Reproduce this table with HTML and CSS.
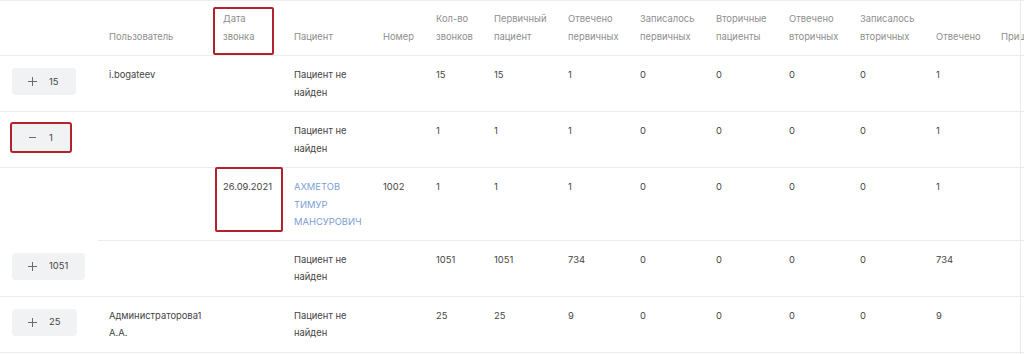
FILE: index.html
```html
<!DOCTYPE html>
<html lang="ru">
<head>
<meta charset="utf-8">
<title>Отчёт по звонкам</title>
<link rel="stylesheet" href="styles.css">
</head>
<body>
<div class="wrap">
<table class="report">
<colgroup>
<col class="w0"><col class="w1"><col class="w2"><col class="w3"><col class="w4"><col class="w5"><col class="w6"><col class="w7"><col class="w8"><col class="w9"><col class="w10"><col class="w11"><col class="w12"><col class="w13">
</colgroup>
<thead>
<tr>
<th></th>
<th>Пользователь</th>
<th class="marked"><span class="mark mark-head"></span>Дата<br>звонка</th>
<th>Пациент</th>
<th>Номер</th>
<th>Кол-во<br>звонков</th>
<th>Первичный<br>пациент</th>
<th>Отвечено<br>первичных</th>
<th>Записалось<br>первичных</th>
<th>Вторичные<br>пациенты</th>
<th>Отвечено<br>вторичных</th>
<th>Записалось<br>вторичных</th>
<th>Отвечено</th>
<th>Пришло</th>
</tr>
</thead>
<tbody>
<tr>
<td class="btn-cell"><button class="toggle"><svg class="ico" viewBox="0 0 9 9"><path d="M0 4.5H9M4.5 0V9"/></svg><span>15</span></button></td>
<td>i.bogateev</td>
<td></td>
<td>Пациент не<br>найден</td>
<td></td>
<td>15</td><td>15</td><td>1</td><td>0</td><td>0</td><td>0</td><td>0</td><td>1</td><td></td>
</tr>
<tr>
<td class="btn-cell"><button class="toggle open"><svg class="ico" viewBox="0 0 9 9"><path d="M1 4.5H8"/></svg><span>1</span></button></td>
<td></td>
<td></td>
<td>Пациент не<br>найден</td>
<td></td>
<td>1</td><td>1</td><td>1</td><td>0</td><td>0</td><td>0</td><td>0</td><td>1</td><td></td>
</tr>
<tr class="child">
<td class="blank"></td>
<td></td>
<td class="marked"><span class="mark mark-cell"></span>26.09.2021</td>
<td><a class="patient" href="#">Ахметов<br>Тимур<br>Мансурович</a></td>
<td>1002</td>
<td>1</td><td>1</td><td>1</td><td>0</td><td>0</td><td>0</td><td>0</td><td>1</td><td></td>
</tr>
<tr>
<td class="btn-cell"><button class="toggle"><svg class="ico" viewBox="0 0 9 9"><path d="M0 4.5H9M4.5 0V9"/></svg><span>1051</span></button></td>
<td></td>
<td></td>
<td>Пациент не<br>найден</td>
<td></td>
<td>1051</td><td>1051</td><td>734</td><td>0</td><td>0</td><td>0</td><td>0</td><td>734</td><td></td>
</tr>
<tr>
<td class="btn-cell"><button class="toggle"><svg class="ico" viewBox="0 0 9 9"><path d="M0 4.5H9M4.5 0V9"/></svg><span>25</span></button></td>
<td>Администраторова1<br>А.А.</td>
<td></td>
<td>Пациент не<br>найден</td>
<td></td>
<td>25</td><td>25</td><td>9</td><td>0</td><td>0</td><td>0</td><td>0</td><td>9</td><td></td>
</tr>
</tbody>
</table>
</div>
</body>
</html>
```
FILE: styles.css
```css
html, body {
  margin: 0;
  padding: 0;
  background: #fff;
}
body {
  font-family: Inter, "Noto Sans", sans-serif;
  font-size: 9.4px;
  color: #454545;
}
.wrap {
  position: relative;
  width: 1024px;
  height: 354px;
  overflow: hidden;
}
.wrap::after {
  content: "";
  position: absolute;
  top: 0;
  bottom: 0;
  left: 1020px;
  width: 1px;
  background: #e9e9e9;
}
.report {
  table-layout: fixed;
  width: 1090px;
  border-collapse: collapse;
  border-top: 1px solid #eeeeee;
}
.w0 { width: 98px; }
.w1 { width: 114px; }
.w2 { width: 71px; }
.w3 { width: 89px; }
.w4 { width: 53px; }
.w5 { width: 58px; }
.w6 { width: 74px; }
.w7 { width: 72px; }
.w8 { width: 76px; }
.w9 { width: 73px; }
.w10 { width: 71px; }
.w11 { width: 76px; }
.w12 { width: 65px; }
.w13 { width: 100px; }

th, td {
  text-align: left;
  padding: 0 6px 0 11px;
  line-height: 17.5px;
  border-bottom: 1px solid #ececec;
  white-space: nowrap;
  overflow: hidden;
}
th {
  height: 55px;
  vertical-align: bottom;
  padding-bottom: 10px;
  font-weight: 400;
  color: #8e8e8e;
  box-sizing: border-box;
}
td {
  vertical-align: top;
  padding-top: 10px;
  padding-bottom: 10px;
}
.child td {
  padding-bottom: 9px;
}
.child td.blank {
  border-bottom-color: transparent;
}
.btn-cell {
  padding: 12px 0 0 12px;
  overflow: visible;
}
.toggle {
  display: inline-flex;
  align-items: center;
  gap: 12px;
  height: 27px;
  padding: 0 17px 0 16px;
  border: none;
  border-radius: 4px;
  background: #f1f2f4;
  font: inherit;
  color: #454545;
  cursor: pointer;
}
.toggle.open {
  border-radius: 1px;
  outline: 2px solid #b0232a;
  outline-offset: 0;
}
.ico {
  width: 9px;
  height: 9px;
  stroke: #6a6a6a;
  stroke-width: 1;
  fill: none;
}
.patient {
  color: #7b9ed6;
  text-decoration: none;
  text-transform: uppercase;
}
.marked {
  position: relative;
  overflow: visible;
}
.mark {
  position: absolute;
  border: 2px solid #b0232a;
  border-radius: 2px;
  box-sizing: border-box;
  pointer-events: none;
}
.mark-head {
  left: 1px;
  top: 6px;
  width: 61px;
  bottom: 0;
}
.mark-cell {
  left: 3px;
  top: -1px;
  width: 68px;
  height: 65px;
}
```
